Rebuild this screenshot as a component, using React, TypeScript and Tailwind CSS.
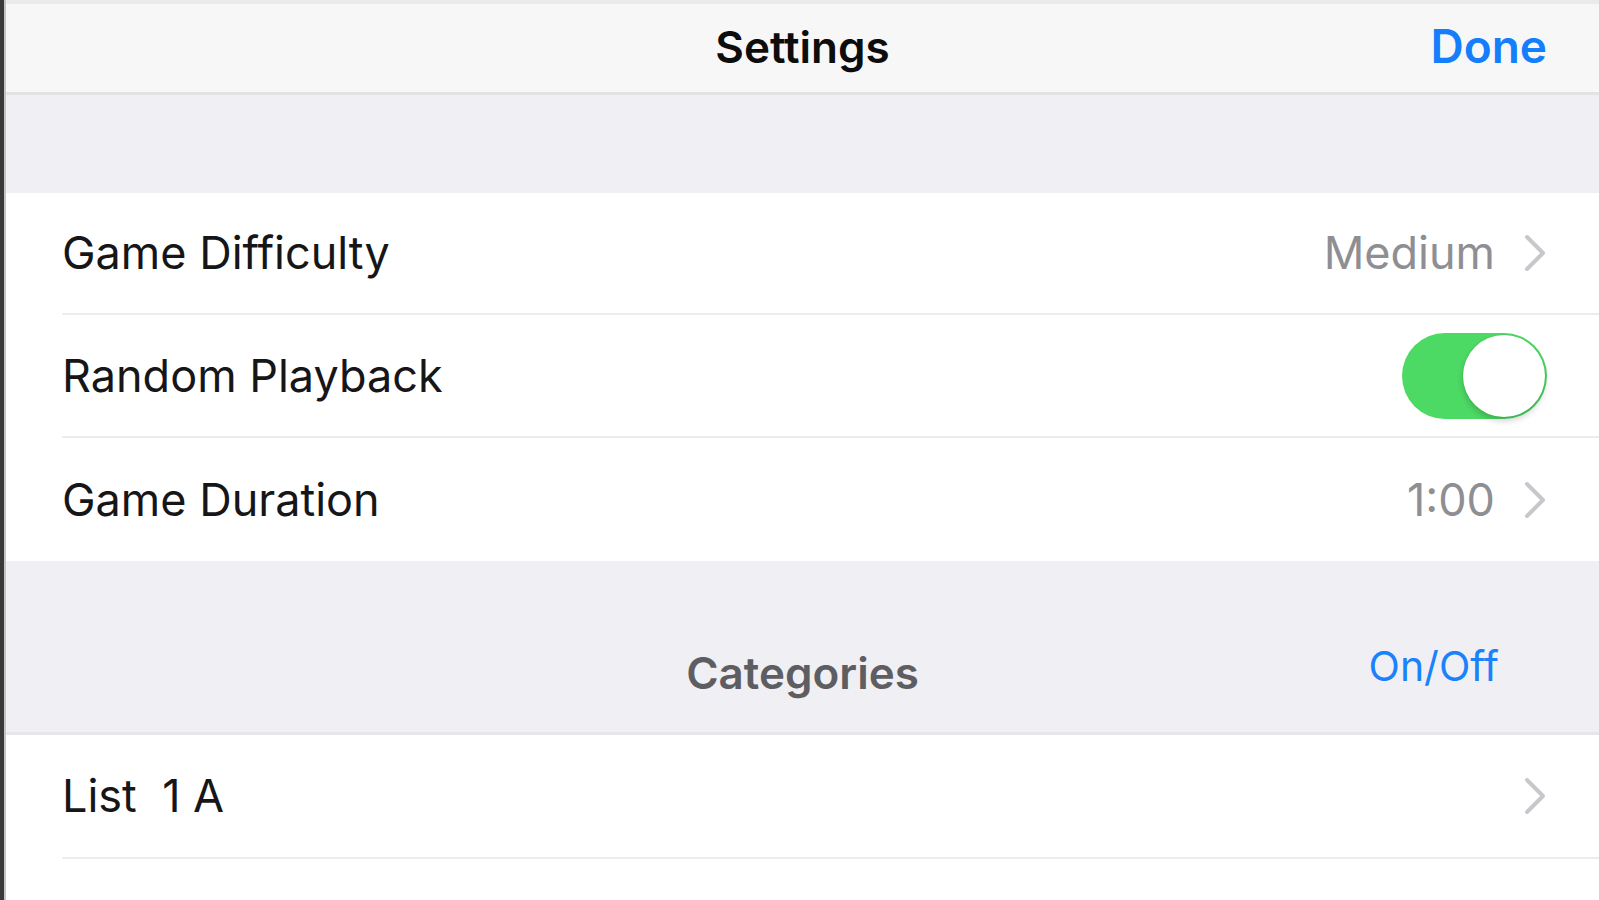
import React from "react";

const Chevron = () => (
  <svg width="24" height="38" viewBox="0 0 24 38" className="shrink-0">
    <path d="M4 3 L20 19 L4 35" fill="none" stroke="#c7c7cc" strokeWidth="4" strokeLinecap="round" strokeLinejoin="round" />
  </svg>
);

const Toggle = () => (
  <div className="relative w-[145px] h-[86px] rounded-full bg-[#4cd964]">
    <div className="absolute right-[2px] top-[2px] w-[82px] h-[82px] rounded-full bg-white shadow-[0_4px_6px_rgba(0,0,0,0.18),0_0_0_1px_rgba(0,0,0,0.04)]" />
  </div>
);

const Row = ({ label, children, last, h }: { label: string; children?: React.ReactNode; last?: boolean; h: string }) => (
  <div className="bg-white pl-[56px]">
    <div className={`${h} flex items-center justify-between pr-[52px] ${last ? "" : "border-b-[2px] border-[#ececef]"}`}>
      <span className="text-[45px] text-[#161618] whitespace-pre">{label}</span>
      <div className="flex items-center gap-[28px]">{children}</div>
    </div>
  </div>
);

export default function App() {
  return (
    <div className="flex h-[900px] w-full bg-white overflow-hidden" style={{ fontFamily: "Inter, 'Liberation Sans', sans-serif" }}>
      <div className="w-[4px] bg-[#3a3a3a] shrink-0" />
      <div className="w-[2px] bg-[#c4c4c4] shrink-0" />
      <div className="flex-1 flex flex-col">
        <div className="h-[4px] bg-[#eaeaea] shrink-0" />
        <header className="h-[91px] shrink-0 bg-[#f7f7f8] border-b-[3px] border-[#e3e3e6] grid grid-cols-[1fr_auto_1fr] items-center pb-[3px]">
          <div />
          <span className="text-[44px] font-semibold text-[#0d0d0d]">Settings</span>
          <span className="justify-self-end pr-[52px] text-[46px] font-semibold text-[#157efb]">Done</span>
        </header>
        <div className="h-[98px] shrink-0 bg-[#efeff4]" />
        <Row label="Game Difficulty" h="h-[122px]">
          <span className="text-[45px] text-[#8e8e93]">Medium</span>
          <Chevron />
        </Row>
        <Row label="Random Playback" h="h-[123px]">
          <Toggle />
        </Row>
        <Row label="Game Duration" h="h-[123px]" last>
          <span className="text-[45px] text-[#8e8e93]">1:00</span>
          <Chevron />
        </Row>
        <div className="h-[174px] shrink-0 bg-[#efeff4] border-b-[3px] border-[#e6e6ea] grid grid-cols-[1fr_auto_1fr] items-center pt-[53px]">
          <div />
          <span className="text-[44px] font-semibold text-[#5e5e62]">Categories</span>
          <span className="justify-self-end pr-[100px] relative -top-[6px] text-[41px] text-[#1a82fb]">On/Off</span>
        </div>
        <Row label="List  1 A" h="h-[124px]">
          <Chevron />
        </Row>
        <div className="flex-1 bg-white" />
      </div>
    </div>
  );
}
